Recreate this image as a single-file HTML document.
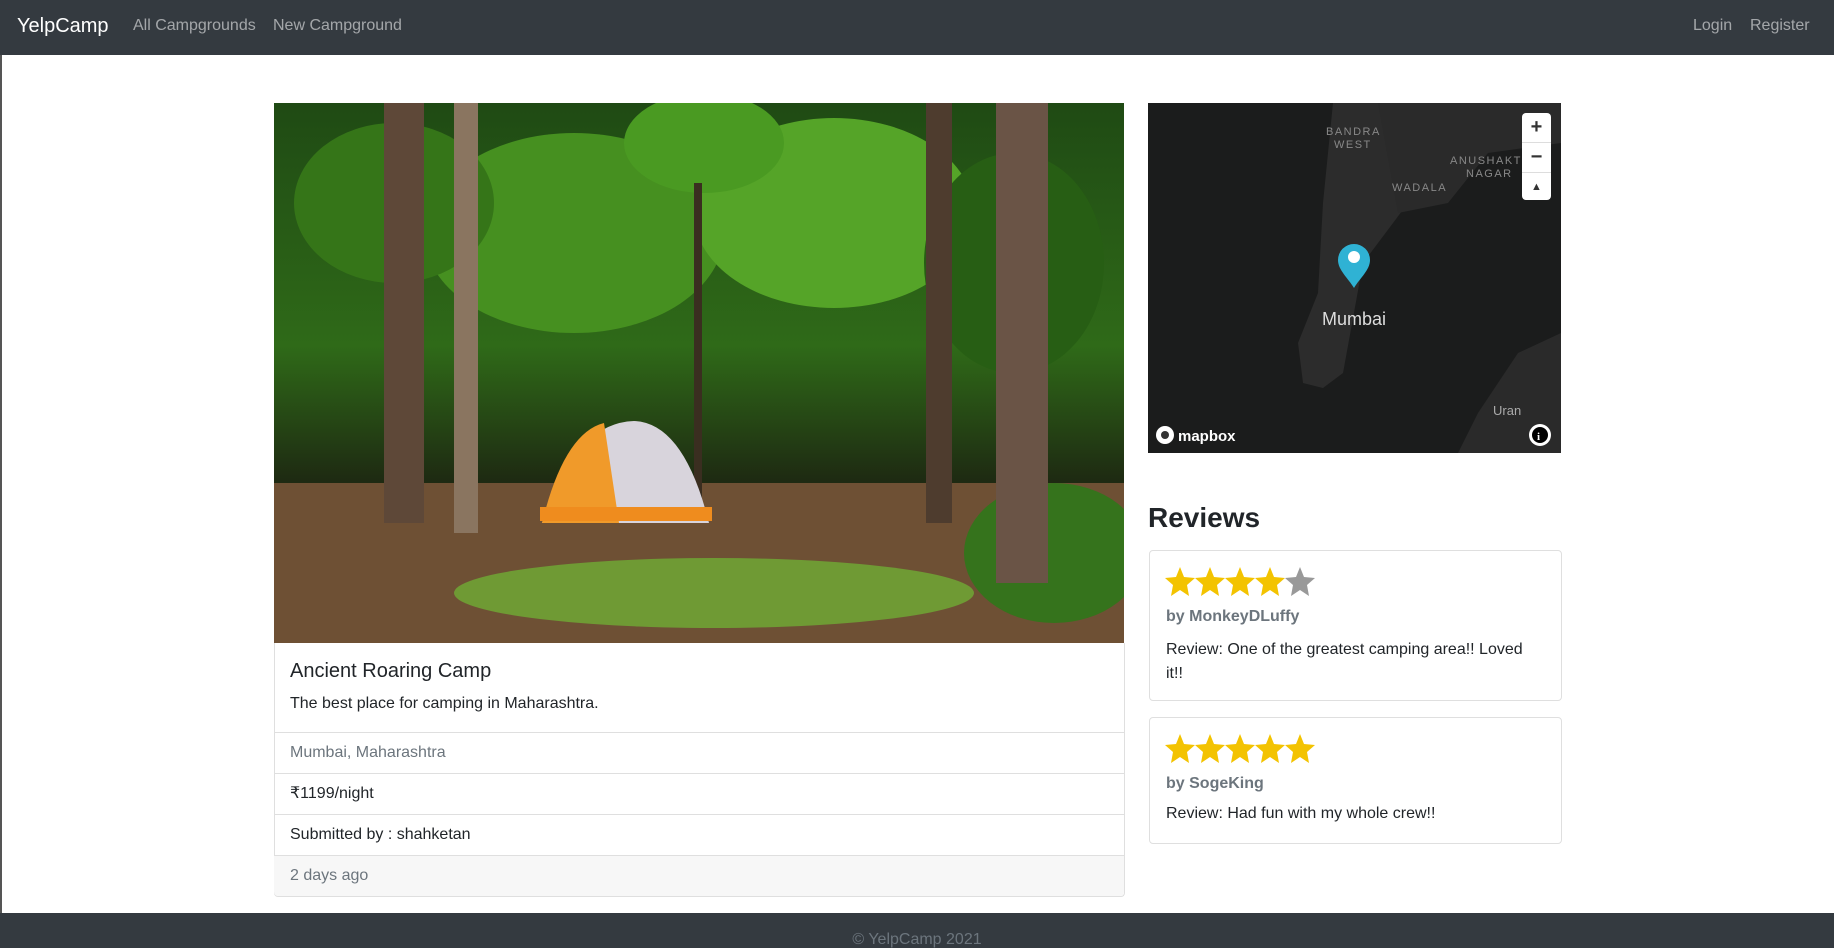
<!DOCTYPE html>
<html><head><meta charset="utf-8"><style>
*{margin:0;padding:0;box-sizing:border-box}
body{width:1834px;height:948px;overflow:hidden;background:#fff;font-family:"Liberation Sans",sans-serif;color:#212529;position:relative}
.nav{position:absolute;left:0;top:0;width:1834px;height:55px;background:#343a40}
.nav span{position:absolute;top:17px;font-size:16px;color:rgba(255,255,255,.55)}
.abs{position:absolute}
.card{position:absolute;border:1px solid #dfdfdf;border-radius:4px;background:#fff}
.li{position:absolute;left:274px;width:850px;border-top:1px solid #dfdfdf;font-size:16px;padding-left:16px}
</style></head><body>
<div class="abs" style="left:0;top:0;width:2px;height:948px;background:#555"></div>
<div class="nav">
<span style="left:17px;top:15px;font-size:20px;color:#fff">YelpCamp</span>
<span style="left:133px">All Campgrounds</span>
<span style="left:273px">New Campground</span>
<span style="left:1693px">Login</span>
<span style="left:1750px">Register</span>
</div>

<svg class="abs" style="left:274px;top:103px" width="850" height="540" viewBox="0 0 850 540">
<defs><linearGradient id="g" x1="0" y1="0" x2="0" y2="1"><stop offset="0" stop-color="#1f4a14"/><stop offset=".45" stop-color="#2f6a18"/><stop offset=".7" stop-color="#1e2a12"/><stop offset="1" stop-color="#5a4a30"/></linearGradient></defs>
<rect width="850" height="540" fill="url(#g)"/>
<ellipse cx="300" cy="130" rx="150" ry="100" fill="#469020"/>
<ellipse cx="560" cy="110" rx="140" ry="95" fill="#55a428"/>
<ellipse cx="120" cy="100" rx="100" ry="80" fill="#357518"/>
<ellipse cx="740" cy="160" rx="90" ry="110" fill="#275e14"/>
<ellipse cx="430" cy="40" rx="80" ry="50" fill="#4a9a22"/>
<rect x="0" y="380" width="850" height="160" fill="#6e5034"/>
<ellipse cx="440" cy="490" rx="260" ry="35" fill="#6f9a34"/>
<ellipse cx="780" cy="450" rx="90" ry="70" fill="#35731c"/>
<rect x="110" y="0" width="40" height="420" fill="#5e4838"/>
<rect x="180" y="0" width="24" height="430" fill="#8a7560"/>
<rect x="652" y="0" width="26" height="420" fill="#4e3c2e"/>
<rect x="722" y="0" width="52" height="480" fill="#6a5446"/>
<rect x="420" y="80" width="8" height="330" fill="#3a2e20"/>
<path d="M268 420 Q300 320 360 318 Q410 320 435 420 Z" fill="#d8d4dc"/>
<path d="M268 420 Q290 330 330 320 L345 420 Z" fill="#f09a2a"/>
<rect x="266" y="404" width="172" height="14" fill="#ef8c1e"/>
</svg>

<div class="abs" style="left:1148px;top:103px;width:413px;height:350px;background:#1b1c1c;overflow:hidden">
<svg width="413" height="350" class="abs" style="left:0;top:0">
<path d="M185 0 L330 0 L320 60 L260 100 L215 160 L195 270 L175 285 L155 280 L150 240 L170 190 L175 100 Z" fill="#2c2c2c"/>
<path d="M230 0 L413 0 L413 40 L340 50 L300 100 L250 110 Z" fill="#2a2a2a"/>
<path d="M330 310 L370 250 L413 230 L413 350 L310 350 Z" fill="#2a2a2a"/>
<text x="178" y="32" fill="#888" font-size="11" letter-spacing="1.5" font-family="Liberation Sans">BANDRA</text>
<text x="186" y="45" fill="#888" font-size="11" letter-spacing="1.5" font-family="Liberation Sans">WEST</text>
<text x="302" y="61" fill="#888" font-size="11" letter-spacing="1.5" font-family="Liberation Sans">ANUSHAKTI</text>
<text x="318" y="74" fill="#888" font-size="11" letter-spacing="1.5" font-family="Liberation Sans">NAGAR</text>
<text x="244" y="88" fill="#888" font-size="11" letter-spacing="1.5" font-family="Liberation Sans">WADALA</text>
<text x="174" y="222" fill="#ddd" font-size="18" font-family="Liberation Sans">Mumbai</text>
<text x="345" y="312" fill="#aaa" font-size="13" font-family="Liberation Sans">Uran</text>
<path d="M206 141 a16 16 0 0 1 16 16 c0 10-10 18-16 28 c-6-10-16-18-16-28 a16 16 0 0 1 16-16z" fill="#2fb2d4"/>
<circle cx="206" cy="154" r="6" fill="#fff"/>
<circle cx="17" cy="332" r="9" fill="#fff"/><circle cx="17" cy="332" r="4" fill="#333"/>
<text x="30" y="338" fill="#fff" font-size="15" font-weight="bold" font-family="Liberation Sans">mapbox</text>
<circle cx="392" cy="332" r="11" fill="#fff"/><circle cx="392" cy="332" r="8" fill="#000"/>
<text x="389" y="337" fill="#fff" font-size="11" font-weight="bold" font-family="Liberation Serif">i</text>
</svg>
<div class="abs" style="left:374px;top:10px;width:29px;height:87px;background:#fff;border-radius:4px;font-size:20px;font-weight:bold;text-align:center;line-height:29px;color:#333">
<div style="border-bottom:1px solid #ddd">+</div><div style="border-bottom:1px solid #ddd">−</div><div style="font-size:11px">▲</div></div>
</div>

<div class="card" style="left:274px;top:643px;width:851px;height:254px;border-top:none;border-radius:0 0 4px 4px"></div>
<div class="abs" style="left:290px;top:660px;font-size:20px">Ancient Roaring Camp</div>
<div class="abs" style="left:290px;top:695px;font-size:16px">The best place for camping in Maharashtra.</div>
<div class="li" style="top:732px;height:41px;line-height:40px;color:#6c757d">Mumbai, Maharashtra</div>
<div class="li" style="top:773px;height:41px;line-height:40px">₹1199/night</div>
<div class="li" style="top:814px;height:41px;line-height:40px">Submitted by : shahketan</div>
<div class="li" style="top:855px;height:41px;line-height:40px;background:#f7f7f7;color:#6c757d;border-radius:0 0 4px 4px">2 days ago</div>

<div class="abs" style="left:1148px;top:502px;font-size:28px;font-weight:bold">Reviews</div>
<div class="card" style="left:1149px;top:550px;width:413px;height:151px"></div>
<div class="abs" style="left:1166px;top:608px;font-size:16px;font-weight:bold;color:#6c757d">by MonkeyDLuffy</div>
<div class="abs" style="left:1166px;top:638px;font-size:16px;line-height:24px;width:370px">Review: One of the greatest camping area!! Loved it!!</div>
<div class="card" style="left:1149px;top:717px;width:413px;height:127px"></div>
<div class="abs" style="left:1166px;top:775px;font-size:16px;font-weight:bold;color:#6c757d">by SogeKing</div>
<div class="abs" style="left:1166px;top:805px;font-size:16px">Review: Had fun with my whole crew!!</div>

<svg class="abs" style="left:1165px;top:567px" width="152" height="200" viewBox="0 0 152 200">
<defs><path id="s" d="M15 0 L19 10 L30 11 L22 18 L24 29 L15 23 L6 29 L8 18 L0 11 L11 10Z"/></defs>
<use href="#s" x="0" fill="#f3c300"/><use href="#s" x="30" fill="#f3c300"/><use href="#s" x="60" fill="#f3c300"/><use href="#s" x="90" fill="#f3c300"/><use href="#s" x="120" fill="#999"/>
<g transform="translate(0,167)"><use href="#s" x="0" fill="#f3c300"/><use href="#s" x="30" fill="#f3c300"/><use href="#s" x="60" fill="#f3c300"/><use href="#s" x="90" fill="#f3c300"/><use href="#s" x="120" fill="#f3c300"/></g>
</svg>

<div class="abs" style="left:0;top:913px;width:1834px;height:35px;background:#343a40"></div>
<div class="abs" style="left:0;top:931px;width:1834px;text-align:center;font-size:16px;color:#6c757d">© YelpCamp 2021</div>
</body></html>
